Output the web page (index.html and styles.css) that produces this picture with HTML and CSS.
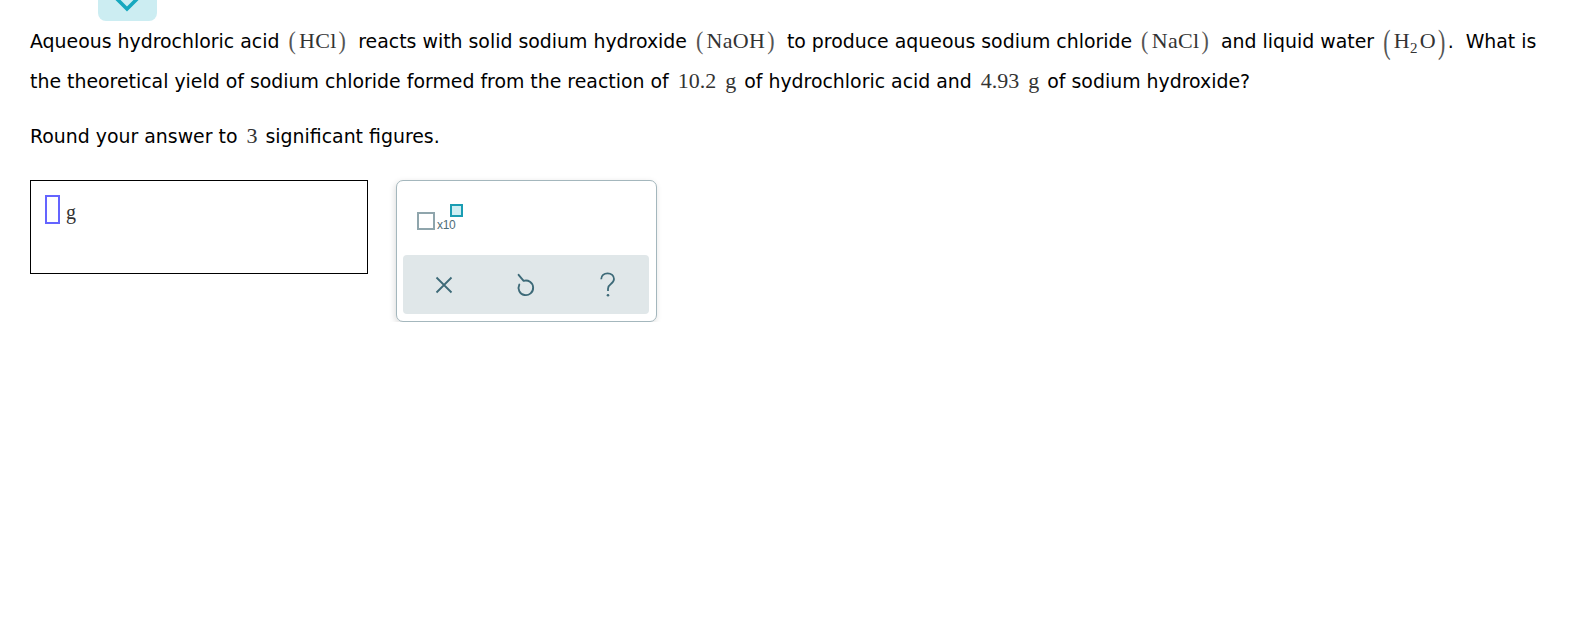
FILE: index.html
```html
<!DOCTYPE html>
<html lang="en">
<head>
<meta charset="utf-8">
<title>Question</title>
<link rel="stylesheet" href="styles.css">
</head>
<body>
<div class="toggle" aria-label="Collapse">
  <svg class="toggle-chevron" width="24" height="12" viewBox="0 0 24 12"><path d="M1 -2 L12 9 L23 -2" fill="none" stroke="#17a8bf" stroke-width="3.6"/></svg>
</div>
<main class="question">
  <p class="prompt">Aqueous hydrochloric acid <span class="math"><span class="paren">(</span>HCl<span class="paren close">)</span></span> reacts with solid sodium hydroxide <span class="math"><span class="paren">(</span>NaOH<span class="paren close">)</span></span> to produce aqueous sodium chloride <span class="math"><span class="paren">(</span>NaCl<span class="paren close">)</span></span> and liquid water <span class="math tight"><span class="paren tall">(</span>H<sub>2</sub>O<span class="paren tall close">)</span></span>. &nbsp;What is<br>the theoretical yield of sodium chloride formed from the reaction of <span class="num">10.2<span class="unit-gap">g</span></span> of hydrochloric acid and <span class="num">4.93<span class="unit-gap">g</span></span> of sodium hydroxide?</p>
  <p class="prompt">Round your answer to <span class="num">3</span> significant figures.</p>
  <div class="answer-row">
    <div class="answer-box">
      <span class="slot"></span>
      <span class="unit">g</span>
    </div>
    <div class="palette">
      <div class="palette-tools">
        <button class="sci" aria-label="Scientific notation">
          <span class="sci-base"></span>
          <span class="sci-times">x10</span>
          <span class="sci-exp"></span>
        </button>
      </div>
      <div class="palette-actions">
        <button class="action" aria-label="Clear">
          <svg width="18" height="18" viewBox="0 0 18 18"><path d="M1.5 1.5 L16.5 16.5 M16.5 1.5 L1.5 16.5" fill="none" stroke="#3d6a78" stroke-width="1.8"/></svg>
        </button>
        <button class="action" aria-label="Undo">
          <svg width="20" height="24" viewBox="0 0 20 24"><path d="M2.6 1.8 L7.6 7.9 A7.3 7.3 0 1 1 3.3 11.6" fill="none" stroke="#3d6a78" stroke-width="1.9" stroke-linecap="round" stroke-linejoin="round"/></svg>
        </button>
        <button class="action" aria-label="Help">
          <svg width="18" height="26" viewBox="0 0 18 26"><path d="M2.2 7.2 C2.2 3.6 5 1.3 8.6 1.3 C12.3 1.3 15 3.8 15 7 C15 9.6 13.4 10.9 11.6 12.2 C10 13.3 9 14.5 9 16.8 V19" fill="none" stroke="#3d6a78" stroke-width="1.8"/><circle cx="9" cy="23.3" r="1.3" fill="#3d6a78"/></svg>
        </button>
      </div>
    </div>
  </div>
</main>
</body>
</html>
```
FILE: styles.css
```css
* {
  box-sizing: border-box;
}

html, body {
  margin: 0;
  padding: 0;
  background: #ffffff;
}

body {
  font-family: "DejaVu Sans", Verdana, sans-serif;
  font-size: 18.9px;
  color: #000000;
}

.toggle {
  position: absolute;
  left: 98px;
  top: 0;
  width: 59px;
  height: 21px;
  background: #ccedf2;
  border-radius: 0 0 8px 8px;
  display: flex;
  justify-content: center;
  align-items: flex-start;
}

.toggle-chevron {
  display: block;
  margin-left: -1px;
}

.question {
  padding: 21px 0 0 30px;
}

.prompt {
  margin: 0;
  line-height: 40px;
  white-space: nowrap;
}

.prompt + .prompt {
  margin-top: 15px;
}

.math {
  font-family: "Liberation Serif", "Times New Roman", serif;
  font-size: 22px;
  color: #333333;
  line-height: 1;
  margin: 0 6px 0 3px;
  letter-spacing: 0.3px;
}

.math.tight {
  margin-right: 2px;
}

.paren {
  display: inline-block;
  color: #555555;
  transform: scaleY(1.1);
  margin-right: 3px;
}

.paren.close {
  margin-right: 0;
  margin-left: 2px;
}

.paren.tall {
  transform: scaleY(1.55) translateY(1px);
}

.math sub {
  font-size: 15px;
  line-height: 1;
  vertical-align: -5px;
  margin-right: 2px;
}

.num {
  font-family: "Liberation Serif", "Times New Roman", serif;
  font-size: 22px;
  color: #333333;
  line-height: 1;
  margin: 0 2px 0 3px;
}

.unit-gap {
  margin-left: 9px;
}

.answer-row {
  display: flex;
  align-items: flex-start;
  gap: 28px;
  margin-top: 24px;
}

.answer-box {
  width: 338px;
  height: 94px;
  border: 1px solid #000000;
  padding: 14px;
  display: flex;
  align-items: flex-start;
  gap: 6px;
}

.slot {
  width: 15px;
  height: 29px;
  border: 2px solid #6464ff;
}

.unit {
  font-family: "Liberation Serif", "Times New Roman", serif;
  font-size: 20px;
  color: #333333;
  line-height: 29px;
  padding-top: 3px;
}

.palette {
  width: 261px;
  height: 142px;
  border: 1px solid #a4b7bd;
  border-radius: 7px;
  background: #ffffff;
  box-shadow: -1px 2px 6px rgba(0, 0, 0, 0.14);
  padding: 0 7px 7px 6px;
  display: flex;
  flex-direction: column;
}

.palette-tools {
  height: 74px;
  padding: 23px 0 0 14px;
}

button {
  font: inherit;
  border: 0;
  background: none;
  padding: 0;
  margin: 0;
  cursor: pointer;
}

.sci {
  display: flex;
  align-items: flex-start;
}

.sci-base {
  width: 18px;
  height: 18px;
  border: 2px solid #8fa5ac;
  background: #ffffff;
  margin-top: 8px;
}

.sci-times {
  font-family: "Liberation Sans", Arial, sans-serif;
  font-size: 12px;
  color: #4f6d78;
  line-height: 1;
  margin-top: 15px;
  margin-left: 2px;
  letter-spacing: -0.3px;
}

.sci-exp {
  width: 13px;
  height: 13px;
  border: 2px solid #1a9db3;
  background: #cdeef3;
  margin-left: -5px;
}

.palette-actions {
  height: 59px;
  background: #e0e7e9;
  border-radius: 4px;
  display: flex;
}

.action {
  flex: 1;
  display: flex;
  align-items: center;
  justify-content: center;
}

.action svg {
  display: block;
}
```
